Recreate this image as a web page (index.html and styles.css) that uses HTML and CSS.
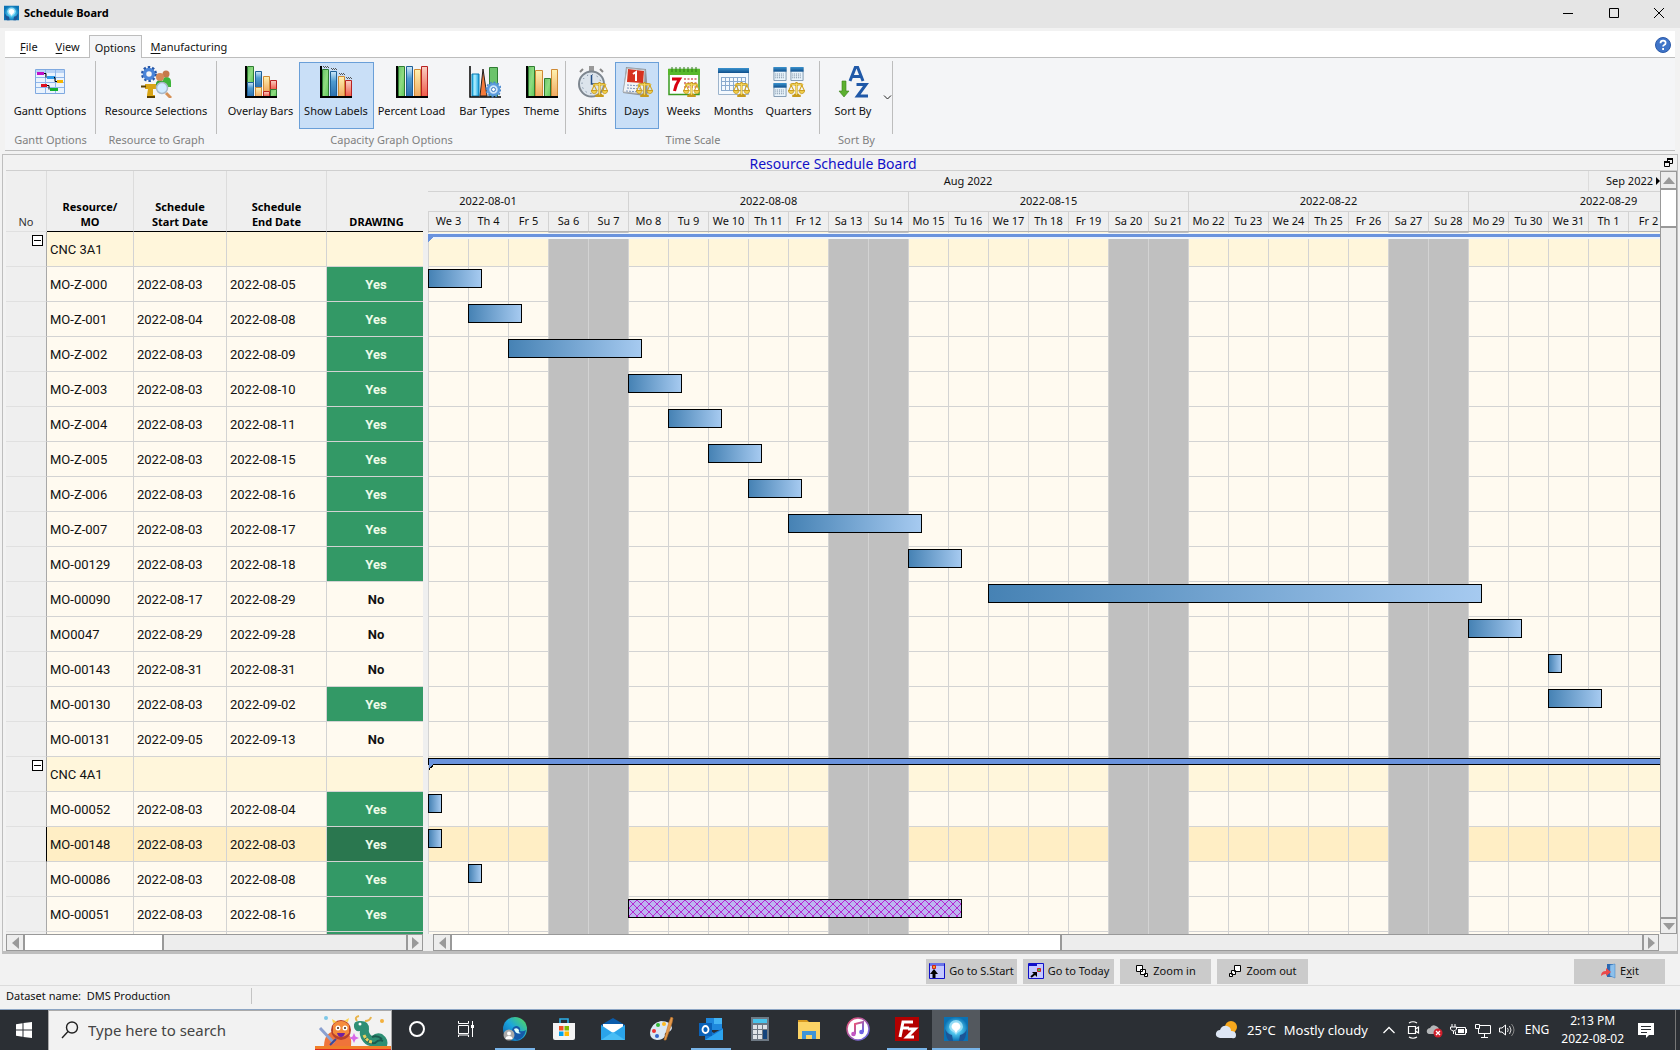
FILE: index.html
```html
<!DOCTYPE html>
<html lang="en">
<head>
<meta charset="utf-8">
<title>Schedule Board</title>
<link rel="stylesheet" href="styles.css">
</head>
<body>
<svg class="defs" aria-hidden="true">
  <defs>
    <linearGradient id="gGreen" x1="0" x2="1" y1="0" y2="1"><stop offset="0" stop-color="#6cc36b"/><stop offset=".5" stop-color="#8fdc80"/><stop offset="1" stop-color="#5fc95a"/></linearGradient>
    <linearGradient id="gBlue" x1="0" x2="0" y1="0" y2="1"><stop offset="0" stop-color="#cfe9fa"/><stop offset=".4" stop-color="#4f9bd0"/><stop offset="1" stop-color="#2b6fae"/></linearGradient>
    <linearGradient id="gGold" x1="0" x2="0" y1="0" y2="1"><stop offset="0" stop-color="#fff2b0"/><stop offset="1" stop-color="#f0a860"/></linearGradient>
    <linearGradient id="gRed" x1="0" x2="0" y1="0" y2="1"><stop offset="0" stop-color="#f9cfc4"/><stop offset="1" stop-color="#f05a48"/></linearGradient>
    <linearGradient id="gCyan" x1="0" x2="1"><stop offset="0" stop-color="#18b5ea"/><stop offset=".4" stop-color="#b5efff"/><stop offset="1" stop-color="#10a0e0"/></linearGradient>
    <linearGradient id="gCal" x1="0" x2="0" y1="0" y2="1"><stop offset="0" stop-color="#3b93cf"/><stop offset="1" stop-color="#0f4f8c"/></linearGradient>
    <radialGradient id="gApp"><stop offset="0" stop-color="#e8fbff"/><stop offset=".45" stop-color="#4cc3ec"/><stop offset="1" stop-color="#0a72b4"/></radialGradient>
    <linearGradient id="gEdge" x1="0" x2="1" y1="1" y2="0"><stop offset="0" stop-color="#0c59a4"/><stop offset=".5" stop-color="#1ba5dd"/><stop offset="1" stop-color="#5be04f"/></linearGradient>
    <linearGradient id="gTune" x1="0" x2="1" y1="0" y2="1"><stop offset="0" stop-color="#f0506e"/><stop offset="1" stop-color="#5a6cf0"/></linearGradient>
    <symbol id="scales" viewBox="0 0 16 16"><path d="M8 1v12M2 4q3-2 6 0q3-2 6 0M4 14h8M5.500 13h5" fill="none" stroke="#c79a1c" stroke-width="2"/><path d="M8 2v11M2 3.500h12" stroke="#f8dc62"/><path d="M3 4L.8 9h4.600zM13 4l-2.200 5h4.600z" fill="none" stroke="#d4a520"/><path d="M0 9h6q-1 3-3 3T0 9zM10 9h6q-1 3-3 3t-3-3z" fill="#f2cf4b" stroke="#b98a12" stroke-width=".6"/></symbol>
    <symbol id="applogo" viewBox="0 0 24 24"><path d="M0 0h24v24H0z" fill="url(#gApp)"/><path d="M5 10a7 7 0 0 1 14 0q-1 4-5 5l-2 3-2-3q-4-1-5-5z" fill="#a8e6fa" opacity=".8"/><path d="M7.500 10a4.500 4.500 0 0 1 9 0q-1 3-3 3.500L12 16l-1.500-2.500q-2-.5-3-3.500z" fill="#fff"/><path d="M1 12q2 5 7 6l1 6H5q-3-3-4-12zM23 12q-2 5-7 6l-1 6h4q3-3 4-12z" fill="#1d5596"/></symbol>
    <symbol id="minical" viewBox="0 0 14 15"><path d="M.500 .500h13v14H.500z" fill="#e8f3fb" stroke="#7b95ad"/><path d="M0 0h14v5H0z" fill="url(#gCal)"/><path d="M2 7.500h10M2 9.500h10M2 11.500h10" stroke="#6d8299" stroke-dasharray="1 1"/></symbol>
  </defs>
</svg>

<header class="titlebar">
  <svg class="app-icon" viewBox="0 0 24 24"><use href="#applogo"/></svg>
  <h1>Schedule Board</h1>
  <div class="win-buttons">
    <button aria-label="Minimize"><svg width="12" height="12"><path d="M1 6.500h10" stroke="#000"/></svg></button>
    <button aria-label="Maximize"><svg width="12" height="12"><path d="M1.500 1.500h9v9h-9z" fill="none" stroke="#000"/></svg></button>
    <button aria-label="Close"><svg width="12" height="12"><path d="M1 1l10 10M11 1L1 11" stroke="#000"/></svg></button>
  </div>
</header>

<section class="ribbon">
  <nav class="tabs">
    <button class="tab"><u>F</u>ile</button>
    <button class="tab"><u>V</u>iew</button>
    <button class="tab active">Options</button>
    <button class="tab"><u>M</u>anufacturing</button>
    <button class="help" aria-label="Help"><svg width="16" height="16"><circle cx="8" cy="8" r="7.500" fill="#3f74c8" stroke="#2c5aa8"/><path d="M5.500 6.200q0-2.500 2.600-2.500t2.500 2.200q0 1.300-1.500 2.100-1 .5-1 1.500M8.100 11v2" fill="none" stroke="#fff" stroke-width="1.800"/></svg></button>
  </nav>
  <div class="groups">
    <div class="group g-gantt">
      <div class="tools">
        <button class="tool"><svg viewBox="0 0 32 32"><path d="M1.500 3.500h29v24h-29z" fill="#eaf3fd" stroke="#7fa9e0"/><path d="M2 4h28v3H2z" fill="#b9d3f5"/><path d="M11.500 4v23M21.500 4v23M2 11.500h28M2 16.500h28M2 21.500h28" stroke="#8fb6ea"/><path d="M3 6h7v3H3z" fill="#c010c8"/><path d="M13 10h8v3h-8z" fill="#2f9bea"/><path d="M23 14h6v3h-6z" fill="#f7b500"/><path d="M7 18h6v3H7z" fill="#e01020"/><path d="M16 22h8v3h-8z" fill="#12b030"/><path d="M10 7.500h2v4M20 11.500h1v4h2M13 19.500h2v4" fill="none" stroke="#000"/></svg><span>Gantt Options</span></button>
      </div>
      <h2>Gantt Options</h2>
    </div>
    <div class="group g-resource">
      <div class="tools">
        <button class="tool"><svg viewBox="0 0 32 32"><circle cx="9" cy="8" r="4.500" fill="none" stroke="#4a84d8" stroke-width="3.500"/><circle cx="9" cy="8" r="7" fill="none" stroke="#2456a8" stroke-width="2" stroke-dasharray="2.500 2"/><path d="M23 15q0-4 3-4 5 0 5 5v5h-8z" fill="#3db53a"/><circle cx="26" cy="8" r="3.500" fill="#c5794a"/><path d="M16 17q1-3 4-3 4 0 5 4v5h-9z" fill="#35a338"/><circle cx="20" cy="11" r="4" fill="#d58a58"/><path d="M5 18h11v5h-3v6h2v3H7v-3l1-6H5z" fill="#d8a414"/><path d="M1 20.500h5M7 31h8" stroke="#5a4000" stroke-width="2"/><path d="M26 27l5 5" stroke="#d59056" stroke-width="3"/><circle cx="22" cy="22" r="5.500" fill="#cfeaff" stroke="#a8b8c8" stroke-width="1.500"/></svg><span>Resource Selections</span></button>
      </div>
      <h2>Resource to Graph</h2>
    </div>
    <div class="group g-capacity">
      <div class="tools">
        <button class="tool w-76"><svg viewBox="0 0 32 32"><path d="M2.500.500h6v16h-6z" fill="url(#gGreen)" stroke="#2f7d32"/><path d="M2.500 16.500h6v14h-6z" fill="url(#gBlue)" stroke="#1d5f96"/><path d="M10.500 5.500h6v16h-6z" fill="url(#gBlue)" stroke="#1d5f96"/><path d="M10.500 21.500h6v9h-6z" fill="url(#gGold)" stroke="#cf8a35"/><path d="M18.500 10.500h6v15h-6z" fill="url(#gGold)" stroke="#cf8a35"/><path d="M18.500 25.500h6v5h-6z" fill="url(#gRed)" stroke="#b82222"/><path d="M25.500 14.500h6v9h-6z" fill="url(#gRed)" stroke="#b82222"/><path d="M25.500 23.500h6v7h-6z" fill="url(#gGreen)" stroke="#2f7d32"/><path d="M1 0v31h31" fill="none" stroke="#000" stroke-width="2"/></svg><span>Overlay Bars</span></button>
        <button class="tool w-75 pressed"><svg viewBox="0 0 32 32"><path d="M3 .500h5M4 1.500h5M11 2.500h5M12 3.500h5M19 7.500h5M20 8.500h5M26 11.500h5M27 12.500h5" stroke="#555" stroke-dasharray="1 1"/><path d="M2.500 3.500h6v27h-6z" fill="url(#gGreen)" stroke="#2f7d32"/><path d="M10.500 5.500h6v25h-6z" fill="url(#gBlue)" stroke="#1d5f96"/><path d="M18.500 10.500h6v20h-6z" fill="url(#gGold)" stroke="#cf8a35"/><path d="M25.500 14.500h6v16h-6z" fill="url(#gRed)" stroke="#b82222"/><path d="M1 0v31h31" fill="none" stroke="#000" stroke-width="2"/></svg><span>Show Labels</span></button>
        <button class="tool w-76"><svg viewBox="0 0 32 32"><path d="M2.500.500h6v30h-6z" fill="url(#gGreen)" stroke="#2f7d32"/><path d="M10.500.500h6v30h-6z" fill="url(#gBlue)" stroke="#1d5f96"/><path d="M18.500 3.500h6v27h-6z" fill="url(#gGold)" stroke="#cf8a35"/><path d="M25.500.500h6v30h-6z" fill="url(#gRed)" stroke="#b82222"/><path d="M1 0v31h31" fill="none" stroke="#000" stroke-width="2"/></svg><span>Percent Load</span></button>
        <button class="tool w-70"><svg viewBox="0 0 32 32"><path d="M3 8h7v22H3z" fill="url(#gCyan)" stroke="#0878b0"/><path d="M14 3l4 27h-7z" fill="#f57a3a" stroke="#222"/><path d="M20.500 1.500h8v29h-8z" fill="#6cc36b" stroke="#2f7d32"/><path d="M1 0v31h31" fill="none" stroke="#000" stroke-width="1.500"/><circle cx="24.500" cy="23.500" r="5.500" fill="#cfe6fa" stroke="#5b9bdc" stroke-width="2.500"/><circle cx="24.500" cy="23.500" r="7.300" fill="none" stroke="#4786cc" stroke-width="1.400" stroke-dasharray="2 1.800"/><circle cx="24.500" cy="23.500" r="2" fill="#fff" stroke="#3a78c0"/></svg><span>Bar Types</span></button>
        <button class="tool w-44"><svg viewBox="0 0 32 32"><path d="M2.500.500h6v30h-6z" fill="url(#gGreen)" stroke="#2f7d32"/><path d="M9.500 4.500h7v26h-7z" fill="url(#gGold)" stroke="#cf8a35"/><path d="M18.500 12.500h6v18h-6z" fill="url(#gGreen)" stroke="#2f7d32"/><path d="M25.500 3.500h6v27h-6z" fill="url(#gGold)" stroke="#cf8a35"/><path d="M1 0v31h31" fill="none" stroke="#000" stroke-width="2"/></svg><span>Theme</span></button>
      </div>
      <h2>Capacity Graph Options</h2>
    </div>
    <div class="group g-time">
      <div class="tools">
        <button class="tool w-44"><svg viewBox="0 0 32 32"><path d="M12 0h5v5h-5z" fill="#999"/><path d="M3 6l3-3M26 6l-3-3" stroke="#888" stroke-width="2"/><circle cx="14.500" cy="18" r="12.500" fill="#dce4ec" stroke="#7d868f" stroke-width="2"/><circle cx="14.500" cy="18" r="9.500" fill="none" stroke="#5a6f88" stroke-dasharray="1 4"/><path d="M14.500 9v9h7" fill="none" stroke="#234e86" stroke-width="1.500"/><use href="#scales" x="14" y="15" width="17" height="17"/></svg><span>Shifts</span></button>
        <button class="tool w-44 pressed"><svg viewBox="0 0 32 32"><path d="M5 1l20 2 2 24-3 3L2 27z" fill="#8f959c"/><path d="M6 2l18 2-2 24-20-2z" fill="#f2f4f6" stroke="#a9aeb4"/><path d="M7 3l16 2-1 12-16-1z" fill="#d6321f"/><path d="M12 8l3-2v9" fill="none" stroke="#fff" stroke-width="2"/><path d="M6 19l14 1M6 22l14 1M5 25l14 1" stroke="#7c94ba" stroke-dasharray="2 1"/><use href="#scales" x="15" y="15" width="17" height="17"/></svg><span>Days</span></button>
        <button class="tool w-50"><svg viewBox="0 0 32 32"><path d="M1 3.500h30v25H1z" fill="#fff" stroke="#3a9a20" stroke-width="1.500"/><path d="M0 3h32v6H0z" fill="#58b82c"/><path d="M4 1v5M8 1v5M12 1v5M16 1v5M20 1v5M24 1v5M28 1v5" stroke="#2c7c14"/><path d="M4 13h7.500q-4 6-5 12" fill="none" stroke="#d80010" stroke-width="3"/><path d="M16 13h14M16 17h14M16 21h14" stroke="#d88" stroke-width="2" stroke-dasharray="2 1.500"/><use href="#scales" x="15" y="15" width="17" height="17"/></svg><span>Weeks</span></button>
        <button class="tool w-50"><svg viewBox="0 0 32 32"><path d="M.500 3.500h30v25H.500z" fill="#f4f9fe" stroke="#9db4cc"/><path d="M0 2h31v5H0z" fill="url(#gCal)"/><path d="M3 11.500h25M3 15.500h25M3 19.500h25M3 24.500h25M3.500 11v14M7.500 11v14M11.500 11v14M15.500 11v14M19.500 11v14M23.500 11v14M27.500 11v14" stroke="#8aaace"/><use href="#scales" x="15" y="15" width="17" height="17"/></svg><span>Months</span></button>
        <button class="tool w-60"><svg viewBox="0 0 32 32"><use href="#minical" x="0" y="1" width="14" height="14"/><use href="#minical" x="17" y="1" width="14" height="14"/><use href="#minical" x="0" y="17" width="14" height="14"/><use href="#scales" x="15" y="15" width="17" height="17"/></svg><span>Quarters</span></button>
      </div>
      <h2>Time Scale</h2>
    </div>
    <div class="group g-sort">
      <div class="tools">
        <button class="tool w-60"><svg viewBox="0 0 32 32"><path d="M5 15v10H2l5 6 5-6H9V15z" fill="#5cb030" stroke="#39821a" stroke-width=".6"/><path d="M13 15l5.500-14h2L26 15M15 10.500h9" fill="none" stroke="#2059a8" stroke-width="3"/><path d="M19.500 18.500H29L20.500 30H31" fill="none" stroke="#2059a8" stroke-width="3"/></svg><span>Sort By</span></button>
        <button class="drop" aria-label="Sort options"><svg width="9" height="5"><path d="M1 .500l3.500 3.500L8 .500" fill="none" stroke="#222"/></svg></button>
      </div>
      <h2>Sort By</h2>
    </div>
  </div>
</section>

<main class="panel">
  <div class="panel-title">
    <h2>Resource Schedule Board</h2>
    <button class="restore" aria-label="Restore"><svg width="9" height="9"><path d="M3.500 3V1h5v4.500H6M.500 4h5v4.500h-5z" fill="none" stroke="#000"/><path d="M0 4h6M3 1h6" stroke="#000" stroke-width="2"/></svg></button>
  </div>
  <div class="board">
    <div class="left-pane">
      <table class="list">
        <colgroup><col class="c-no"><col class="c-res"><col class="c-start"><col class="c-end"><col class="c-draw"></colgroup>
        <thead><tr><th class="no">No</th><th>Resource/<br>MO</th><th>Schedule<br>Start Date</th><th>Schedule<br>End Date</th><th>DRAWING</th></tr></thead>
        <tbody>
          <tr class="parent"><th class="no"><button class="toggle" aria-label="Collapse CNC 3A1"></button></th><td>CNC 3A1</td><td></td><td></td><td></td></tr>
          <tr><th class="no"></th><td>MO-Z-000</td><td>2022-08-03</td><td>2022-08-05</td><td class="yes">Yes</td></tr>
          <tr><th class="no"></th><td>MO-Z-001</td><td>2022-08-04</td><td>2022-08-08</td><td class="yes">Yes</td></tr>
          <tr><th class="no"></th><td>MO-Z-002</td><td>2022-08-03</td><td>2022-08-09</td><td class="yes">Yes</td></tr>
          <tr><th class="no"></th><td>MO-Z-003</td><td>2022-08-03</td><td>2022-08-10</td><td class="yes">Yes</td></tr>
          <tr><th class="no"></th><td>MO-Z-004</td><td>2022-08-03</td><td>2022-08-11</td><td class="yes">Yes</td></tr>
          <tr><th class="no"></th><td>MO-Z-005</td><td>2022-08-03</td><td>2022-08-15</td><td class="yes">Yes</td></tr>
          <tr><th class="no"></th><td>MO-Z-006</td><td>2022-08-03</td><td>2022-08-16</td><td class="yes">Yes</td></tr>
          <tr><th class="no"></th><td>MO-Z-007</td><td>2022-08-03</td><td>2022-08-17</td><td class="yes">Yes</td></tr>
          <tr><th class="no"></th><td>MO-00129</td><td>2022-08-03</td><td>2022-08-18</td><td class="yes">Yes</td></tr>
          <tr><th class="no"></th><td>MO-00090</td><td>2022-08-17</td><td>2022-08-29</td><td class="not">No</td></tr>
          <tr><th class="no"></th><td>MO0047</td><td>2022-08-29</td><td>2022-09-28</td><td class="not">No</td></tr>
          <tr><th class="no"></th><td>MO-00143</td><td>2022-08-31</td><td>2022-08-31</td><td class="not">No</td></tr>
          <tr><th class="no"></th><td>MO-00130</td><td>2022-08-03</td><td>2022-09-02</td><td class="yes">Yes</td></tr>
          <tr><th class="no"></th><td>MO-00131</td><td>2022-09-05</td><td>2022-09-13</td><td class="not">No</td></tr>
          <tr class="parent"><th class="no"><button class="toggle" aria-label="Collapse CNC 4A1"></button></th><td>CNC 4A1</td><td></td><td></td><td></td></tr>
          <tr><th class="no"></th><td>MO-00052</td><td>2022-08-03</td><td>2022-08-04</td><td class="yes">Yes</td></tr>
          <tr class="selected"><th class="no"></th><td>MO-00148</td><td>2022-08-03</td><td>2022-08-03</td><td class="yes">Yes</td></tr>
          <tr><th class="no"></th><td>MO-00086</td><td>2022-08-03</td><td>2022-08-08</td><td class="yes">Yes</td></tr>
          <tr><th class="no"></th><td>MO-00051</td><td>2022-08-03</td><td>2022-08-16</td><td class="yes">Yes</td></tr>
          <tr><th class="no"></th><td></td><td></td><td></td><td class="yes"></td></tr>
        </tbody>
      </table>
    </div>
    <div class="gantt">
      <div class="scale">
        <div class="months"><div class="aug">Aug 2022</div><div class="sep">Sep 2022<i class="more"></i></div></div>
        <div class="weeks"><div class="first">2022-08-01</div><div>2022-08-08</div><div>2022-08-15</div><div>2022-08-22</div><div>2022-08-29</div></div>
        <div class="days"><span>We 3</span><span>Th 4</span><span>Fr 5</span><span>Sa 6</span><span>Su 7</span><span>Mo 8</span><span>Tu 9</span><span>We 10</span><span>Th 11</span><span>Fr 12</span><span>Sa 13</span><span>Su 14</span><span>Mo 15</span><span>Tu 16</span><span>We 17</span><span>Th 18</span><span>Fr 19</span><span>Sa 20</span><span>Su 21</span><span>Mo 22</span><span>Tu 23</span><span>We 24</span><span>Th 25</span><span>Fr 26</span><span>Sa 27</span><span>Su 28</span><span>Mo 29</span><span>Tu 30</span><span>We 31</span><span>Th 1</span><span>Fr 2</span></div>
      </div>
      <div class="row parent"><div class="summary active"></div></div>
      <div class="row"><div class="bar" style="margin-left:0px;width:54px"></div></div>
      <div class="row"><div class="bar" style="margin-left:40px;width:54px"></div></div>
      <div class="row"><div class="bar" style="margin-left:80px;width:134px"></div></div>
      <div class="row"><div class="bar" style="margin-left:200px;width:54px"></div></div>
      <div class="row"><div class="bar" style="margin-left:240px;width:54px"></div></div>
      <div class="row"><div class="bar" style="margin-left:280px;width:54px"></div></div>
      <div class="row"><div class="bar" style="margin-left:320px;width:54px"></div></div>
      <div class="row"><div class="bar" style="margin-left:360px;width:134px"></div></div>
      <div class="row"><div class="bar" style="margin-left:480px;width:54px"></div></div>
      <div class="row"><div class="bar" style="margin-left:560px;width:494px"></div></div>
      <div class="row"><div class="bar" style="margin-left:1040px;width:54px"></div></div>
      <div class="row"><div class="bar" style="margin-left:1120px;width:14px"></div></div>
      <div class="row"><div class="bar" style="margin-left:1120px;width:54px"></div></div>
      <div class="row"></div>
      <div class="row parent"><div class="summary"></div></div>
      <div class="row"><div class="bar" style="margin-left:0px;width:14px"></div></div>
      <div class="row selected"><div class="bar" style="margin-left:0px;width:14px"></div></div>
      <div class="row"><div class="bar" style="margin-left:40px;width:14px"></div></div>
      <div class="row"><div class="bar hatch" style="margin-left:200px;width:334px"></div></div>
      <div class="row"></div>
    </div>
    <div class="vscroll"><button class="up" aria-label="Scroll up"></button><div class="thumb"></div><button class="down" aria-label="Scroll down"></button></div>
    <div class="hscroll list-scroll"><button class="prev" aria-label="Scroll left"></button><div class="thumb"></div><button class="next" aria-label="Scroll right"></button></div>
    <div class="hscroll gantt-scroll"><button class="prev" aria-label="Scroll left"></button><div class="thumb"></div><button class="next" aria-label="Scroll right"></button></div>
  </div>
</main>

<section class="actions">
  <div class="nav-actions">
    <button><svg width="16" height="16"><path d="M.500.500h15v15H.500z" fill="#c4c8ff" stroke="#1010c8"/><path d="M1 0h14v3H1z" fill="#6a74e8"/><path d="M3.500 2.500h3v3h-3z" fill="#f0a020" stroke="#d02020"/><path d="M5 15V9" stroke="#000" stroke-width="3"/><path d="M1 11l4-5 4 5z"/></svg>Go to S.Start</button>
    <button><svg width="16" height="16"><path d="M.500.500h15v15H.500z" fill="#c4c8ff" stroke="#1010c8"/><path d="M1 0h8v3H1z" fill="#1010c8"/><path d="M9.500 5.500h3v3h-3z" fill="#30c040" stroke="#d02020"/><path d="M3 14l5-4" stroke="#000" stroke-width="2"/><path d="M4 9h5v5z"/></svg>Go to Today</button>
    <button><svg width="14" height="14"><path d="M1.500 1.500h6v6h-6zM5.500 5.500h5v5h-5zM9.500 9.500h3v3h-3z" fill="#fff" stroke="#000"/></svg>Zoom in</button>
    <button><svg width="14" height="14"><path d="M1.500 9.500h3v3h-3zM3.500 6.500h4v4h-4zM6.500 1.500h6v6h-6z" fill="#fff" stroke="#000"/></svg>Zoom out</button>
  </div>
  <button class="exit"><svg width="16" height="16"><path d="M7 1h6v13H7z" fill="#2a66b0"/><path d="M10 2l5-1v14l-5-2z" fill="#8cc0ec" stroke="#3b7cc0" stroke-width=".5"/><path d="M1 13q0-5 5-5V5l5 4-5 4v-2q-3 0-5 2z" fill="#ec4a4a"/></svg><span>E<u>x</u>it</span></button>
</section>
<footer class="status"><span>Dataset name:&nbsp; DMS Production</span></footer>

<div class="taskbar">
  <button class="start" aria-label="Start"><svg width="16" height="16"><path d="M0 2.200L6.500 1.300V7.500H0zM7.500 1.100L16 0v7.500H7.500zM0 8.500h6.500v6.200L0 13.800zM7.500 8.500H16V16l-8.500-1.100z" fill="#fff"/></svg></button>
  <label class="search"><svg width="18" height="18"><circle cx="11" cy="6.500" r="5.500" fill="none" stroke="#222" stroke-width="1.400"/><path d="M7 10.500L1 17" stroke="#222" stroke-width="1.400"/></svg><input type="text" placeholder="Type here to search" aria-label="Search">
    <svg class="doodle" viewBox="0 0 76 35"><circle cx="11" cy="3" r="2" fill="#7cc8e8"/><circle cx="67" cy="6" r="2" fill="#f4b03c"/><path d="M0 31h76v4H0z" fill="#f08028"/><path d="M0 34h76v1H0z" fill="#d22"/><path d="M9 31q0-15 15-16 14 1 12 16z" fill="#f0743a"/><circle cx="26" cy="15" r="10" fill="#b8402c"/><path d="M18 10q8-8 16 0v8q-8 8-16 0z" fill="#f58c3c"/><path d="M18 8l-1-4 5 3zM33 7l1-4-5 3z" fill="#ffd24a"/><circle cx="23" cy="13" r="2.500" fill="#fff"/><circle cx="30" cy="13" r="2.500" fill="#fff"/><circle cx="23" cy="13" r="1" fill="#421"/><circle cx="30" cy="13" r="1" fill="#421"/><path d="M22 18h8q-1 4-4 4t-4-4z" fill="#7020a0"/><path d="M5 13l14 15" stroke="#8ba0d0" stroke-width="3"/><path d="M15 30l6-6" stroke="#404898" stroke-width="2"/><path d="M39 18l1.500 3.500L44 23l-3.500 1.500L39 28l-1.500-3.500L34 23l3.500-1.500z" fill="#d868e8"/><path d="M39 12q-1-7 7-6 8 0 8 8-1 4 3 7 4-4 10-2 7 5 5 12H55q-5-1-8-6t-2-9q-5 1-6-4z" fill="#2f8f74"/><path d="M42 6q-3-4 2-5M50 6q5 0 6-4" fill="none" stroke="#e8b44c" stroke-width="2"/><path d="M50 23q3 6 10 5 4-4 8-2M57 22q5-2 10 2" fill="none" stroke="#1c5c50" stroke-width="2"/><path d="M49 20q3 7 9 7" fill="none" stroke="#e8d060" stroke-width="3" stroke-dasharray="3 1"/><circle cx="45" cy="9" r="1.500" fill="#fff"/></svg>
  </label>
  <div class="apps">
    <button aria-label="Cortana"><svg viewBox="0 0 24 24"><circle cx="12" cy="12" r="7" fill="none" stroke="#fff" stroke-width="2"/></svg></button>
    <button aria-label="Task view"><svg viewBox="0 0 24 24"><path d="M4.500 8.500h10v8h-10zM4.500 4v2.500h10V4M4.500 20v-2h10v2M18.500 4v16" fill="none" stroke="#fff"/><path d="M17 8h3v3h-3z" fill="#fff"/></svg></button>
    <button aria-label="Edge" class="running"><svg viewBox="0 0 24 24"><circle cx="12" cy="12" r="12" fill="url(#gEdge)"/><path d="M9 13q1-4 5-4 4 1 3 5 3 1 6-1-2 9-9 10-6-2-5-10z" fill="#1559a8"/><path d="M11 12q3-2 5 1-1 3 2 3-5 2-7-4z" fill="#dff"/><circle cx="6" cy="18" r="5.500" fill="#aaa"/><circle cx="6" cy="16.500" r="2" fill="#fff"/><path d="M2.500 22q0-3 3.500-3t3.500 3z" fill="#fff"/></svg></button>
    <button aria-label="Store"><svg viewBox="0 0 24 24"><path d="M8 6V2h8v4" fill="none" stroke="#2cb0e8" stroke-width="1.600"/><path d="M1 6h22v15q0 2-2 2H3q-2 0-2-2z" fill="#f4f4f4"/><path d="M7 9h4.500v4.500H7z" fill="#f25022"/><path d="M12.500 9H17v4.500h-4.500z" fill="#7fba00"/><path d="M7 14.500h4.500V19H7z" fill="#00a4ef"/><path d="M12.500 14.500H17V19h-4.500z" fill="#ffb900"/></svg></button>
    <button aria-label="Mail"><svg viewBox="0 0 24 24"><path d="M0 8l12-7 12 7v15H0z" fill="#0a5cab"/><path d="M2 7h20v9H2z" fill="#fff"/><path d="M0 8l12 8 12-8v15H0z" fill="#2aa4ea"/><path d="M0 23l12-8 12 8z" fill="#48bdf5"/></svg></button>
    <button aria-label="Paint"><svg viewBox="0 0 24 24"><path d="M0 16Q1 6 11 4q10 0 11 7-1 4-5 4-3 1-2 4-2 4-8 4-7-1-7-7z" fill="#dbe8f4"/><circle cx="4" cy="14" r="2" fill="#e33"/><circle cx="8" cy="8" r="2" fill="#3b3"/><circle cx="14" cy="7" r="2" fill="#fb2"/><circle cx="7" cy="19" r="2" fill="#36c"/><path d="M21 0l-2 5-5 18h2l6-17 1-5z" fill="#e49a4c" stroke="#bd722a" stroke-width=".6"/></svg></button>
    <button aria-label="Outlook" class="running"><svg viewBox="0 0 24 24"><path d="M7 1h16v12H7z" fill="#1e88dd"/><path d="M15 1h8v6h-8z" fill="#43b4f4"/><path d="M6 11l9 5 9-5v12H6z" fill="#1475cc"/><path d="M6 23l18-11v11z" fill="#2ca4ef"/><path d="M0 6h13v13H0z" fill="#0a62b8"/><ellipse cx="6.500" cy="12.500" rx="3" ry="3.500" fill="none" stroke="#fff" stroke-width="1.800"/></svg></button>
    <button aria-label="Calculator"><svg viewBox="0 0 24 24"><path d="M3 0h18v24H3z" fill="#6e7984"/><path d="M5 2h14v4H5z" fill="#48c4ec"/><path d="M5 8h4v4H5zM10 8h4v4h-4zM15 8h4v4h-4zM5 13h4v4H5zM10 13h4v4h-4zM5 18h4v4H5zM10 18h4v4h-4z" fill="#dfe4e8"/><path d="M15 13h4v9h-4z" fill="#13447c"/></svg></button>
    <button aria-label="File Explorer"><svg viewBox="0 0 24 24"><path d="M1 3h9l2 2h-11z" fill="#d89a20"/><path d="M1 5h22v17H1z" fill="#fbd365"/><path d="M5 22v-8h14v8h-4v-4H9v4z" fill="#3f94d8"/></svg></button>
    <button aria-label="iTunes"><svg viewBox="0 0 24 24"><circle cx="12" cy="12" r="11" fill="#fff" stroke="url(#gTune)" stroke-width="1.500"/><path d="M9 17V7l8-2v10" fill="none" stroke="url(#gTune)" stroke-width="2"/><circle cx="7.500" cy="17" r="2.300" fill="#c455c4"/><circle cx="15.500" cy="15" r="2.300" fill="#6f63e6"/></svg></button>
    <button aria-label="FileZilla" class="running"><svg viewBox="0 0 24 24"><path d="M0 0h24v24H0z" fill="#b30000"/><path d="M5 20L8 5h10M7 11h7M13 12h7l-8 8h7" fill="none" stroke="#fff" stroke-width="3"/></svg></button>
    <button aria-label="Schedule Board" class="running current"><svg viewBox="0 0 24 24"><use href="#applogo"/></svg></button>
  </div>
  <div class="tray">
    <div class="weather"><svg width="24" height="20"><circle cx="16" cy="7" r="6" fill="#f8a81c"/><path d="M5 18q-5-1-4-5 1-3 4-3 2-5 7-4 4 1 4 5 5 0 5 4t-4 3z" fill="#dde6f4"/></svg><span>25°C</span><span>Mostly cloudy</span></div>
    <svg class="chevron" width="14" height="20"><path d="M1.500 13L7 7.500l5.500 5.500" fill="none" stroke="#fff" stroke-width="1.300"/></svg>
    <svg width="14" height="20"><path d="M2.500 6.500h7v7h-7zM9.500 9l3-2v6l-3-2M3 3q4-2.500 8 0M3 17q4 2.500 8 0" fill="none" stroke="#fff" stroke-width="1.200"/></svg>
    <svg width="18" height="20"><path d="M3 14q-3-1-2-4 1-2 3-2 2-4 6-2 3 1 3 4l-3 4z" fill="#b4b6b8"/><circle cx="12" cy="13" r="4.500" fill="#d0202c"/><path d="M10 11l4 4M14 11l-4 4" stroke="#fff" stroke-width="1.300"/></svg>
    <svg width="18" height="20"><path d="M2 4v3M5 4v3M.500 7h6v2q-1 2-3 2t-3-2zM3.500 11v3" fill="none" stroke="#fff"/><path d="M6.500 7.500h9v7h-10v-3" fill="none" stroke="#fff"/><path d="M8 9h6v4H8z" fill="#fff"/><path d="M16 9h1v4h-1z" fill="#fff"/></svg>
    <svg width="18" height="20"><path d="M6 5.500h10.500v8H4.500V9M10.500 14v3M7 17.500h7M1.500 4.500h4v4h-4z" fill="none" stroke="#fff"/></svg>
    <svg width="18" height="20"><path d="M1.500 8h2.500l3.500-3v10l-3.500-3H1.500z" fill="none" stroke="#fff"/><path d="M9.500 8q1.500 2 0 4M11.500 6q3 4 0 8" fill="none" stroke="#ddd"/><path d="M13.500 4q5 6 0 12" fill="none" stroke="#888"/></svg>
    <span class="lang">ENG</span>
    <div class="clock"><span>2:13 PM</span><span>2022-08-02</span></div>
    <button class="notes" aria-label="Notifications"><svg width="16" height="17"><path d="M0 1h16v12h-5l-3 3v-3H0z" fill="#fff"/><path d="M3 4.500h10M3 7.500h10M3 10.500h6" stroke="#2b2f34"/></svg></button>
  </div>
</div>
</body>
</html>
```
FILE: styles.css
```css
* { box-sizing: border-box; }
body {
  margin: 0;
  height: 100vh;
  display: flex;
  flex-direction: column;
  background: #f2f2f2;
  color: #111;
  font: 11px/14px "Noto Sans", "Open Sans", sans-serif;
  overflow: hidden;
}
button { margin: 0; padding: 0; border: 0; background: none; color: inherit; font: inherit; }
h1, h2 { margin: 0; font-size: inherit; font-weight: normal; }
svg { display: block; flex: none; }
u { text-underline-offset: 2px; }
.defs { position: absolute; width: 0; height: 0; }

/* title bar */
.titlebar { display: flex; align-items: center; flex: none; height: 28px; padding: 0 0 3px 4px; gap: 5px; background: #e5e5e5; }
.app-icon { width: 15px; height: 16px; }
.titlebar h1 { font-size: 11px; font-weight: bold; color: #000; }
.win-buttons { display: flex; margin-left: auto; }
.win-buttons button { width: 46px; height: 24px; display: grid; place-items: center; }
.win-buttons button:last-child { width: 43px; }

/* ribbon */
.ribbon { flex: none; margin: 3px 5px 0; background: #f4f5f7; border-bottom: 1px solid #bdbdbd; }
.tabs { display: flex; align-items: flex-end; height: 27px; padding-left: 6px; background: #fff; border-bottom: 1px solid #bdbdbd; }
.tab { height: 22px; padding: 2px 9px 0; }
.tab.active { margin-bottom: -1px; height: 23px; padding: 1px 5px 0; background: #f4f5f7; border: 1px solid #bdbdbd; border-bottom: 0; }
.help { margin: 0 4px 4px auto; }
.groups { display: flex; height: 92px; padding-top: 3px; }
.group { display: flex; flex-direction: column; }
.tools { display: flex; justify-content: center; height: 73px; border-right: 1px solid #bdbdbd; }
.group h2 { margin-top: -1px; text-align: center; color: #808080; }
.g-gantt { width: 91px; }
.g-resource { width: 121px; }
.g-capacity { width: 349px; }
.g-time { width: 254px; }
.g-sort { width: 73px; }
.g-capacity .tools, .g-time .tools { padding-left: 4px; }
.tool { display: flex; flex-direction: column; align-items: center; gap: 6px; height: 67px; padding-top: 3px; margin-top: 1px; border: 1px solid transparent; white-space: nowrap; }
.tool svg { width: 32px; height: 32px; }
.tool.pressed { background: #c9dff7; border-color: #6a9fd8; }
.w-44 { width: 44px; }
.w-50 { width: 50px; }
.w-60 { width: 60px; }
.w-70 { width: 70px; }
.w-75 { width: 75px; }
.w-76 { width: 76px; }
.drop { width: 6px; display: grid; place-items: center; }

/* board panel */
.panel { flex: 1; min-height: 0; display: flex; flex-direction: column; margin: 3px 2px 0; border: 1px solid #bebebe; border-bottom: 3px solid #bebebe; padding-left: 3px; }
.panel-title { display: flex; justify-content: center; align-items: center; height: 16px; flex: none; border-bottom: 1px solid #cfcfcf; }
.panel-title h2 { flex: 1; text-align: center; font-size: 14px; line-height: 16px; padding: 2px 4px 0 0; color: #1010c8; }
.restore { margin-right: 4px; }
.board { flex: 1; min-height: 0; display: grid; grid-template: minmax(0, 1fr) 17px / 417px minmax(0, 1fr) 17px; background: #efefef; }
.left-pane { overflow: hidden; }
.gantt { margin-left: 5px; overflow: hidden; }

/* list */
.list { width: 417px; border-collapse: separate; border-spacing: 0; table-layout: fixed; }
.c-no { width: 41px; }
.c-res { width: 87px; }
.c-start { width: 93px; }
.c-end { width: 100px; }
.c-draw { width: 96px; }
.list thead th { height: 61px; padding: 0 0 2px; vertical-align: bottom; font-size: 11px; line-height: 15px; color: #000; border-right: 1px solid #dcdcdc; border-bottom: 1px solid #000; }
.list thead th:last-child { border-right: 0; padding-left: 3px; }
.list thead .no { font-weight: normal; color: #333; border-bottom-color: #e0e0e0; }
.list tbody td, .list tbody th { height: 35px; padding: 1px 3px 0; border-right: 1px solid #d3d3d3; border-bottom: 1px solid #d3d3d3; }
.list tbody td { background: #fffaf0; font: 13px/16px Roboto, sans-serif; color: #111; }
.list tbody .no { border-right-color: #a8a8a8; border-bottom-color: #e0e0e0; vertical-align: top; padding: 3px 3px 0; }
.list tbody td:last-child { border-right: 0; }
.list .parent td { background: #fff6db; }
.list .selected td { background: #ffeec5; }
.list tbody .selected .no { border-right-color: #000; }
.list tbody .yes, .list tbody .not { text-align: center; font-weight: bold; padding-left: 5px; }
.list tbody .yes { background: #339966; color: #eefbe8; }
.list .selected .yes { background: #2a774f; }
.toggle { display: block; width: 11px; height: 11px; margin-left: auto; border: 1px solid #000; background: linear-gradient(#000, #000) center / 7px 1px no-repeat #fff; }

/* time scale */
.scale { height: 61px; border-bottom: 1px solid #b4b4b4; overflow: hidden; }
.months, .weeks, .days { display: flex; width: max-content; }
.months { height: 21px; line-height: 20px; border-bottom: 1px solid #d3d3d3; }
.aug { width: 1161px; padding-right: 80px; text-align: center; border-right: 1px solid #dcdcdc; }
.sep { display: flex; align-items: center; gap: 3px; padding-left: 17px; width: 120px; }
.more { border: 4px solid transparent; border-left-color: #000; border-right: 0; }
.weeks { height: 20px; line-height: 18px; border-bottom: 1px solid #d3d3d3; }
.weeks div { width: 280px; text-align: center; border-right: 1px solid #d3d3d3; }
.weeks .first { width: 201px; padding-right: 80px; }
.days span { width: 40px; height: 19px; line-height: 18px; text-align: center; border-left: 1px solid #d3d3d3; white-space: nowrap; }

/* bars */
.row {
  height: 35px;
  padding-top: 2px;
  overflow: hidden;
  background:
    repeating-linear-gradient(90deg, #d3d3d3 0 1px, transparent 1px 40px),
    repeating-linear-gradient(90deg, transparent 0 120px, #c0c0c0 120px 200px, transparent 200px 280px),
    linear-gradient(#d3d3d3, #d3d3d3) bottom / 100% 1px no-repeat,
    var(--row, #fffaf0);
}
.row.parent { --row: #fff6db; padding-top: 1px; }
.row.selected { --row: #ffeec5; }
.bar { height: 19px; border: 1px solid #000; background: linear-gradient(90deg, #4682b4, #a6caf0); }
.bar.hatch {
  background:
    linear-gradient(45deg, transparent 44%, #b428d0 44% 56%, transparent 56%) 0 0 / 8px 8px,
    linear-gradient(-45deg, transparent 44%, #b428d0 44% 56%, transparent 56%) 0 0 / 8px 8px,
    #bcb4f0;
}
.summary { height: 7px; border: solid #000; border-width: 1px 0 1px 1px; background: #6a93dd; }
.summary::before { content: ""; display: block; height: 5px; }
.summary::after { content: ""; display: block; width: 6px; height: 6px; background: linear-gradient(135deg, #6a93dd 36%, #000 36% 50%, transparent 50%); }
.summary.active { height: 6px; border: solid #eef4fb; border-width: 1px 0 2px; }
.summary.active::before { height: 3px; }
.summary.active::after { background: linear-gradient(135deg, #6a93dd 45%, transparent 45%); }

/* scroll bars */
.vscroll, .hscroll { display: flex; border: 1px solid #999; background: #ededed; }
.vscroll { flex-direction: column; }
.vscroll button, .hscroll button { display: grid; place-items: center; flex: none; }
.vscroll button { height: 16px; }
.hscroll button { width: 16px; }
.vscroll button::before, .hscroll button::before { content: ""; border: 6px solid transparent; }
.thumb { flex: none; background: #fff; }
.vscroll .thumb { height: 40px; border: solid #999; border-width: 2px 0; }
.vscroll .up::before { border-bottom: 7px solid #999; border-top: 0; }
.vscroll .down { margin-top: auto; border-top: 2px solid #999; }
.vscroll .down::before { border-top: 7px solid #999; border-bottom: 0; }
.hscroll .thumb { border: solid #999; border-width: 0 2px; }
.hscroll .prev::before { border-right: 7px solid #999; border-left: 0; }
.hscroll .next { margin-left: auto; border-left: 2px solid #999; }
.hscroll .next::before { border-left: 7px solid #999; border-right: 0; }
.list-scroll .thumb { width: 34%; }
.gantt-scroll { margin: 0 1px 0 10px; }
.gantt-scroll .thumb { width: 50%; }

/* footer */
.actions { display: flex; flex: none; align-items: center; justify-content: flex-end; height: 32px; padding: 3px 15px 0 0; border-bottom: 1px solid #dcdcdc; gap: 266px; }
.nav-actions { display: flex; gap: 6px; }
.actions button { display: flex; align-items: center; justify-content: center; gap: 4px; width: 91px; height: 25px; background: #cbcbcb; white-space: nowrap; }
.status { flex: none; height: 23px; padding: 2px 0 0 6px; }
.status span { display: block; width: 246px; height: 16px; line-height: 16px; border-right: 1px solid #c4c4c4; }

/* taskbar */
.taskbar { flex: none; display: flex; height: 41px; background: #2b2f34; border-top: 1px solid #8ea6c4; color: #fff; }
.start { width: 48px; display: grid; place-items: center; }
.search { display: flex; align-items: center; gap: 9px; width: 344px; padding: 0 0 2px 12px; background: #f2f2f2; border: 1px solid #aaa; border-bottom: 0; }
.search input { flex: 1; min-width: 0; border: 0; padding: 0; background: none; font: 15px/20px "Noto Sans", sans-serif; }
.search input::placeholder { color: #444; opacity: 1; }
.doodle { width: 76px; height: 35px; align-self: flex-end; margin-bottom: -2px; }
.apps { display: flex; gap: 1px; padding-left: 1px; }
.apps button { width: 48px; height: 40px; padding-bottom: 2px; display: grid; place-items: center; }
.apps svg { width: 24px; height: 24px; }
.apps .running { background: linear-gradient(#78b4e8, #78b4e8) bottom / 40px 2px no-repeat; }
.apps .current { background: linear-gradient(#78b4e8, #78b4e8) bottom / 48px 2px no-repeat #53585e; }
.tray { display: flex; align-items: center; margin-left: auto; gap: 6px; border-right: 1px solid #777; margin-right: 4px; }
.weather { display: flex; align-items: center; gap: 8px; font-size: 13px; line-height: 20px; margin-right: 8px; }
.chevron { margin-right: 4px; }
.lang { font-size: 12px; margin-left: 3px; }
.clock { display: flex; flex-direction: column; align-items: center; margin-left: 6px; font-size: 12px; line-height: 18px; }
.notes { width: 32px; margin-right: 13px; display: grid; place-items: center; }
```
